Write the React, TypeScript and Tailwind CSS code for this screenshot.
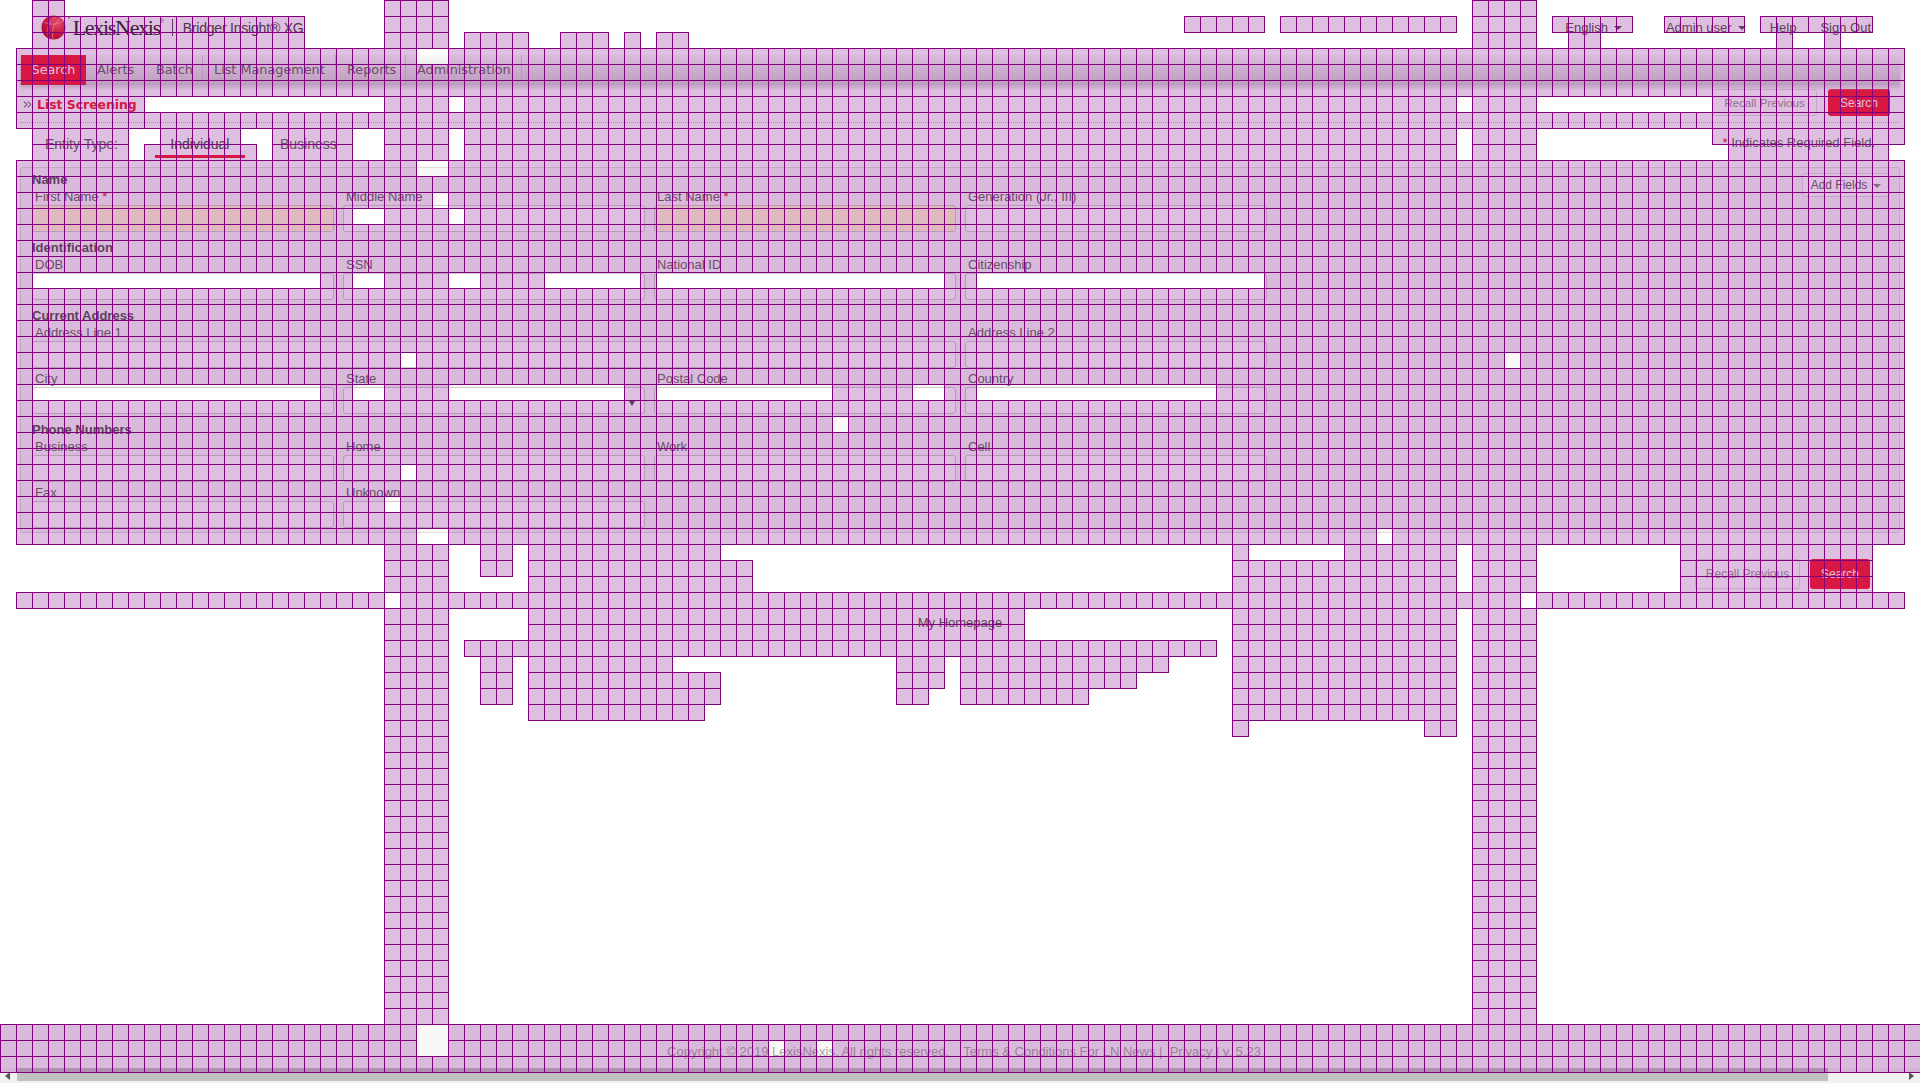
import { ChevronsRight } from 'lucide-react';

// the magenta 16px tile layer: inclusive column runs for every row
const full = (holes: number[] = [], from = 1, to = 118) => {
  const runs: number[][] = [];
  let start = -1;
  for (let c = from; c <= to + 1; c++) {
    const open = c <= to && !holes.includes(c);
    if (open && start < 0) start = c;
    if (!open && start >= 0) {
      runs.push([start, c - 1]);
      start = -1;
    }
  }
  return runs;
};

const range = (a: number, b: number) => Array.from({ length: b - a + 1 }, (_, i) => a + i);

const side = [[24, 27], [92, 95]];
const wideRow = full();

const tileRows: number[][][] = [
  [[2, 3], [24, 27], [92, 95]],
  [[2, 18], [24, 27], [74, 78], [80, 90], [92, 95], [97, 101], [104, 108], [110, 116]],
  [[2, 18], [24, 27], [29, 32], [35, 37], [39, 39], [41, 42], [92, 95], [98, 99], [111, 111], [114, 114]],
  full([26, 27]),
  wideRow,
  wideRow,
  [[1, 8], [24, 27], [29, 90], [92, 95], [107, 118]],
  wideRow,
  [[2, 7], [10, 14], [17, 21], [24, 27], [29, 90], [92, 95], [107, 118]],
  [[2, 7], [9, 15], [17, 21], [24, 27], [29, 90], [92, 95], [108, 117]],
  full([26, 27]),
  wideRow,
  full([27]),
  full([22, 23, 28]),
  wideRow,
  wideRow,
  wideRow,
  full([...range(2, 19), 22, 23, 28, 29, ...range(34, 39), ...range(41, 58), ...range(61, 78)]),
  wideRow,
  wideRow,
  wideRow,
  wideRow,
  full([25, 94]),
  wideRow,
  full([...range(2, 19), 22, 23, ...range(28, 38), ...range(41, 51), 57, 58, ...range(61, 75)]),
  wideRow,
  full([52]),
  wideRow,
  wideRow,
  full([25]),
  wideRow,
  full([24]),
  wideRow,
  full([26, 27, 86]),
  [[24, 27], [30, 31], [33, 44], [77, 77], [84, 90], [92, 95], [105, 116]],
  [[24, 27], [30, 31], [33, 46], [77, 90], [92, 95], [105, 116]],
  [[24, 27], [33, 46], [77, 90], [92, 95], [105, 116]],
  full([24, 95]),
  [[24, 27], [33, 63], [77, 90], [92, 95]],
  [[24, 27], [33, 63], [77, 90], [92, 95]],
  [[24, 27], [29, 75], [77, 90], [92, 95]],
  [[24, 27], [30, 31], [33, 41], [56, 58], [60, 72], [77, 90], [92, 95]],
  [[24, 27], [30, 31], [33, 44], [56, 58], [60, 70], [77, 90], [92, 95]],
  [[24, 27], [30, 31], [33, 44], [56, 57], [60, 67], [77, 90], [92, 95]],
  [[24, 27], [33, 43], [77, 90], [92, 95]],
  [[24, 27], [77, 77], [89, 90], [92, 95]],
  ...Array.from({ length: 18 }, () => side),
  full([26, 27], 0, 119),
  full([26, 27, 48, 51], 0, 119),
  full([], 0, 119),
];

const TileLayer = () => (
  <div className="absolute top-0 left-0 w-[1920px] h-[1073px] overflow-hidden pointer-events-none grid grid-cols-[repeat(120,16px)] auto-rows-[16px]">
    {tileRows.map((runs, row) =>
      runs.map(([a, b]) => (
        <div
          key={`${row}-${a}`}
          className="-mr-px -mb-px bg-[#80008040] bg-[linear-gradient(#800080_1px,transparent_1px),linear-gradient(90deg,#800080_1px,transparent_1px)] bg-[size:16px_16px]"
          style={{ gridRow: row + 1, gridColumn: `${a + 1} / ${b + 2}` }}
        />
      )),
    )}
  </div>
);

const Globe = () => (
  <svg width="25" height="25" viewBox="0 0 25 25" className="shrink-0">
    <defs>
      <radialGradient id="ball" cx="0.65" cy="0.3" r="0.8">
        <stop offset="0" stopColor="#ff6a6a" />
        <stop offset="0.55" stopColor="#e8202c" />
        <stop offset="1" stopColor="#a80f1c" />
      </radialGradient>
    </defs>
    <circle cx="12.5" cy="12.5" r="12" fill="url(#ball)" />
    <path d="M16 1 C8 5 5 13 8 24 M21 3 C13 7 10 14 12 24 M3 7 C9 10 16 10 23 6" fill="none" stroke="#ffb0b0" strokeWidth="0.7" />
  </svg>
);

const Caret = ({ color = 'border-t-[#555]' }: { color?: string }) => (
  <span className={`inline-block ml-1.5 align-middle border-x-[4px] border-x-transparent border-t-[4px] ${color}`} />
);

const navItems = [
  { label: 'Alerts', w: 'w-[59px]' },
  { label: 'Batch', w: 'w-[58px]' },
  { label: 'List Management', w: 'w-[133px]' },
  { label: 'Reports', w: 'w-[70px]' },
  { label: 'Administration', w: 'w-[116px]' },
];

const Field = ({ label, required, tint, className, select }: { label: string; required?: boolean; tint?: boolean; className?: string; select?: boolean }) => (
  <div className={className}>
    <div className="h-[17px] pl-[3px] text-[13px] leading-[17px] text-[#666]">
      {label}
      {required && <span className="text-[#e8202c]"> *</span>}
    </div>
    <div className={`relative h-[27px] rounded-[3px] border border-[#ccc] ${tint ? 'bg-[#fff8d4]' : 'bg-white'}`}>
      {select && <span className="absolute right-[9px] top-[13px] border-x-[3px] border-x-transparent border-t-[5px] border-t-[#555]" />}
    </div>
  </div>
);

const Heading = ({ children }: { children: string }) => (
  <div className="h-4 text-[13px] leading-4 font-bold text-[#555]">{children}</div>
);

const Row = ({ children, className = '' }: { children: React.ReactNode; className?: string }) => (
  <div className={`grid grid-cols-[repeat(4,302px)] gap-x-[9px] ${className}`}>{children}</div>
);

const RecallButton = ({ className }: { className: string }) => (
  <button className={`rounded-[3px] border border-[#ddd] bg-white text-[#999] ${className}`}>Recall Previous</button>
);

const SearchButton = ({ className }: { className: string }) => (
  <button className={`rounded-[3px] bg-[#f6202e] text-[12px] text-white ${className}`}>Search</button>
);

export default function App() {
  return (
    <div className="relative h-[1083px] w-[1920px] overflow-hidden bg-white font-['Liberation_Sans',sans-serif] flex flex-col">
      <header className="h-[55px] shrink-0 flex items-center pl-[41px] pr-[49px] text-[#555]">
        <Globe />
        <span className="ml-[2px] self-start mt-[16px] text-[9px] leading-none text-[#444]">'</span>
        <span className="ml-[3px] font-['Liberation_Serif',serif] text-[22px] tracking-[-1.3px] text-[#2a2a2a]">LexisNexis</span>
        <span className="self-start mt-[19px] text-[5px] leading-none text-[#444]">®</span>
        <span className="ml-[8px] h-[17px] w-px bg-[#555]" />
        <span className="ml-[10px] mt-[2px] text-[14px] tracking-[-0.2px] text-[#444]">Bridger Insight® XG</span>
        <div className="ml-auto flex items-center text-[13px]">
          <span>English<Caret /></span>
          <span className="ml-[44px]">Admin user<Caret /></span>
          <span className="ml-[24px]">Help</span>
          <span className="ml-[24px]">Sign Out</span>
        </div>
      </header>

      <nav className="relative ml-5 w-[1880px] h-[30px] shrink-0 flex bg-gradient-to-b from-[#fafafa] to-[#d2d2d2] shadow-[0_3px_3px_#ddd] font-['DejaVu_Sans',sans-serif] text-[12.8px]">
        <span className="ml-px w-[65px] bg-[#f6202e] text-white flex items-center justify-center">Search</span>
        {navItems.map((item) => (
          <span key={item.label} className={`${item.w} pl-[11px] flex items-center border-r border-[#ccc] text-[#666]`}>
            {item.label}
          </span>
        ))}
      </nav>

      <div className="ml-5 w-[1880px] h-[38px] shrink-0 flex items-start border-b border-dotted border-[#bbb]">
        <ChevronsRight className="mt-[13px] ml-[1px] h-[13px] w-[13px] text-[#777]" />
        <span className="mt-[11px] ml-[3px] font-['DejaVu_Sans',sans-serif] text-[12.4px] font-bold text-[#f6202e]">List Screening</span>
        <RecallButton className="ml-auto mt-1 h-[27px] w-[105px] text-[11.6px]" />
        <SearchButton className="ml-[11px] mr-[10px] mt-1 h-[27px] w-[62px]" />
      </div>

      <div className="relative h-[44px] shrink-0 flex items-start text-[13px] text-[#666]">
        <span className="ml-[45px] mt-[11px] text-[14px]">Entity Type:</span>
        <span className="ml-[37px] mt-[11px] w-[90px] h-[24px] text-center text-[14px] text-[#444] border-b-[3px] border-[#f6202e]">Individual</span>
        <span className="ml-[35px] mt-[11px] text-[14px]">Business</span>
        <span className="ml-auto mr-[45px] mt-[10px]"><span className="text-[#e8202c]">* </span>Indicates Required Field.</span>
      </div>

      <section className="relative ml-5 w-[1880px] h-[366px] shrink-0 rounded-[3px] border border-[#ddd] bg-[#f8f8f8] pl-[11px] pt-1">
        <button className="absolute right-[9px] top-[5px] h-[24px] w-[88px] rounded-[3px] border border-[#ddd] bg-white text-[12px] text-[#666]">
          Add Fields<Caret color="border-t-[#888]" />
        </button>
        <Heading>Name</Heading>
        <Row>
          <Field label="First Name" required tint />
          <Field label="Middle Name" />
          <Field label="Last Name" required tint />
          <Field label="Generation (Jr., III)" />
        </Row>
        <div className="mt-2"><Heading>Identification</Heading></div>
        <Row>
          <Field label="DOB" />
          <Field label="SSN" />
          <Field label="National ID" />
          <Field label="Citizenship" />
        </Row>
        <div className="mt-2"><Heading>Current Address</Heading></div>
        <Row>
          <Field label="Address Line 1" className="col-span-3" />
          <Field label="Address Line 2" />
        </Row>
        <Row className="mt-[2px]">
          <Field label="City" />
          <Field label="State" select />
          <Field label="Postal Code" />
          <Field label="Country" />
        </Row>
        <div className="mt-2"><Heading>Phone Numbers</Heading></div>
        <Row>
          <Field label="Business" />
          <Field label="Home" />
          <Field label="Work" />
          <Field label="Cell" />
        </Row>
        <Row className="mt-[2px]">
          <Field label="Fax" />
          <Field label="Unknown" />
        </Row>
      </section>

      <div className="h-[56px] shrink-0 flex items-end justify-end pr-[50px]">
        <RecallButton className="h-[30px] w-[105px] text-[12px]" />
        <SearchButton className="ml-[10px] h-[30px] w-[60px]" />
      </div>

      <div className="mt-[24px] text-center text-[13px] text-[#555]">My Homepage</div>

      <footer className="mt-auto h-[44px] shrink-0 bg-[#f8f8f8] pt-[20px] pl-[8px] text-center text-[13px] leading-4 text-[#aaa]">
        Copyright © 2019 LexisNexis. All rights reserved. &nbsp;&nbsp; Terms &amp; Conditions For LN News | &nbsp;Privacy | v. 5.23
      </footer>

      <div className="h-[15px] shrink-0 flex bg-[#f1f1f1]">
        <div className="w-[17px] flex items-center pl-[5px]">
          <span className="border-y-[4px] border-y-transparent border-r-[5px] border-r-[#555]" />
        </div>
        <div className="w-[1811px] h-[13px] bg-[#c1c1c1]" />
        <div className="ml-auto w-[17px] flex items-center justify-center">
          <span className="border-y-[4px] border-y-transparent border-l-[5px] border-l-[#555]" />
        </div>
      </div>

      <TileLayer />
    </div>
  );
}
